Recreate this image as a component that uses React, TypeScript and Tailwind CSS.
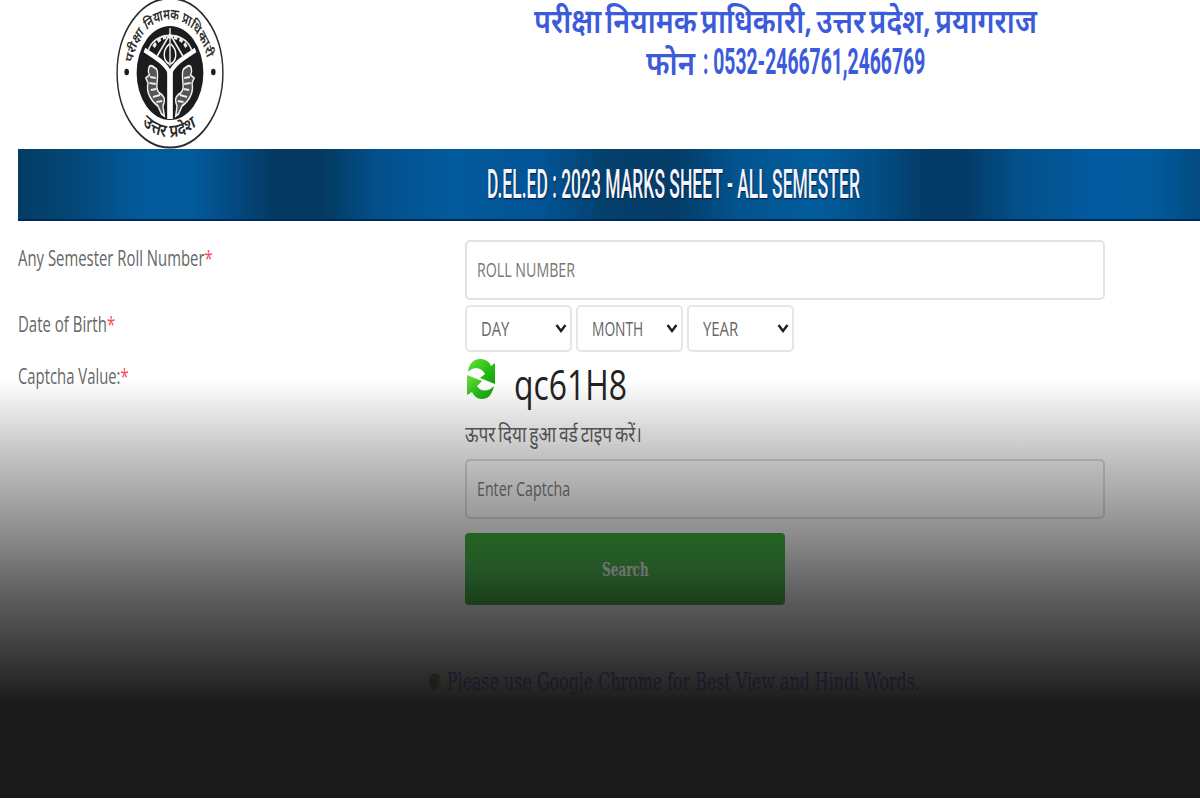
import { useLayoutEffect, useRef, useState, type ReactNode } from "react";

// Condenses its text horizontally so that it fills exactly `width` pixels
function FitText({ width, className = "", children }: { width: number; className?: string; children: ReactNode }) {
  const ref = useRef<HTMLSpanElement>(null);
  const [scale, setScale] = useState(1);

  useLayoutEffect(() => {
    if (ref.current) setScale(width / ref.current.offsetWidth);
  }, [width]);

  return (
    <span className="block" style={{ width }}>
      <span
        ref={ref}
        className={`inline-block origin-left whitespace-nowrap align-top ${className}`}
        style={{ transform: `scaleX(${scale})` }}
      >
        {children}
      </span>
    </span>
  );
}

function Emblem() {
  return (
    <svg className="h-[149px] w-[108px]" viewBox="0 0 108 149" fill="none">
      <g transform="translate(54 73) scale(0.71 1)">
        <circle r="74.5" fill="#fff" stroke="#2a2a2a" strokeWidth="2" />
        <circle r="47" fill="#1c1c1c" />
        <circle cx="-61" cy="-1" r="3.2" fill="#1c1c1c" />
        <circle cx="61" cy="-1" r="3.2" fill="#1c1c1c" />
        <path id="arc-top" d="M-53 -10 A54 54 0 0 1 53 -10" />
        <path id="arc-bottom" d="M-39 51 A64 64 0 0 0 39 51" />
        <text className="font-['Noto_Sans',sans-serif] text-[15px] font-semibold" fill="#2a2a2a">
          <textPath href="#arc-top" textLength="144" lengthAdjust="spacingAndGlyphs">
            परीक्षा नियामक प्राधिकारी
          </textPath>
        </text>
        <text className="font-['Noto_Sans',sans-serif] text-[18px] font-semibold" fill="#2a2a2a">
          <textPath href="#arc-bottom" textLength="81" lengthAdjust="spacingAndGlyphs">
            उत्तर प्रदेश
          </textPath>
        </text>
        {/* bow and river fork */}
        <path d="M-36 -23 C-22 -16 -5 -10 0 1 C5 -10 22 -16 36 -23" stroke="#fff" strokeWidth="5" />
        <path d="M-4 -2 H4 V46 H-4 Z" fill="#fff" />
        <path d="M0 -45 V-7 M0 -39 L-18 -17 M0 -39 L18 -17 M-31 -21 C-25 -43 25 -43 31 -21" stroke="#eee" strokeWidth="2" />
        <path d="M-23 -26 C-15 -40 15 -40 23 -26" stroke="#eee" strokeWidth="4" strokeDasharray="5 3" />
        <path d="M-1 -29 C-12 -22 -9 -12 -1 -9 M1 -29 C12 -22 9 -12 1 -9" stroke="#fff" strokeWidth="2" />
        {/* twin fish */}
        <g id="fish" stroke="#eee" strokeWidth="2">
          <path d="M-25 -7 C-30 -9 -32 -2 -29 2 L-34 5 L-31 10 C-34 19 -27 28 -17 33 L-12 41 L-8 43 L-10 33 C-5 25 -10 22 -15 20 C-23 15 -14 3 -19 -4 Z" fill="#555" />
          <path d="M-28 4 L-20 5 M-29 10 L-20 11 M-27 17 L-19 16 M-24 24 L-14 22 M-19 29 L-11 28" />
        </g>
        <use href="#fish" transform="scale(-1 1)" />
      </g>
    </svg>
  );
}

function RefreshIcon() {
  return (
    <svg className="h-[42px] w-[31px]" viewBox="0 0 31 42">
      <defs>
        <linearGradient id="leaf" x1="0" y1="0" x2="1" y2="1">
          <stop offset="0" stopColor="#6be03c" />
          <stop offset="0.55" stopColor="#2bbd16" />
          <stop offset="1" stopColor="#159c0e" />
        </linearGradient>
      </defs>
      <path d="M2 14 C3 5 8 1 14 1 C19 1 23 3 25 8 L29 5 V26 L14 20 L19 16 C15 9 8 8 2 14 Z" fill="url(#leaf)" />
      <path d="M28 28 C26 37 22 41 16 41 C11 41 8 38 6 34 L1 37 V17 L16 23 L11 28 C15 34 22 34 28 28 Z" fill="url(#leaf)" />
    </svg>
  );
}

function Label({ width, children }: { width: number; children: ReactNode }) {
  return (
    <FitText width={width} className="text-[21px] leading-9 text-[#666]">
      {children}
      <span className="text-[#ff4a55]">*</span>
    </FitText>
  );
}

function SelectBox({ label, width }: { label: string; width: number }) {
  return (
    <div className="flex h-[47px] w-[107px] items-center justify-between rounded-[5px] border-2 border-[#e6e6e6] bg-white pr-[3px] pl-[14px]">
      <FitText width={width} className="text-[20px] leading-8 text-[#666]">
        {label}
      </FitText>
      <svg className="h-3 w-3" viewBox="0 0 12 12" fill="none">
        <path d="M1.5 2 L6 8 L10.5 2" stroke="#1e1e1e" strokeWidth="2.4" />
      </svg>
    </div>
  );
}

const dateParts = [
  { label: "DAY", width: 28 },
  { label: "MONTH", width: 51 },
  { label: "YEAR", width: 35 },
];

export default function App() {
  return (
    <div className="relative h-[800px] w-[1200px] overflow-hidden bg-white font-['Open_Sans','Noto_Sans',sans-serif]">
      <header className="flex h-[149px] pl-[116px]">
        <Emblem />
        <div className="ml-[310px] flex w-[503px] flex-col items-center text-[#3b5bdb]">
          <FitText
            width={503}
            className="font-['Noto_Sans',sans-serif] text-[34px] leading-[40px] font-semibold [word-spacing:-4px]"
          >
            परीक्षा नियामक प्राधिकारी, उत्तर प्रदेश, प्रयागराज
          </FitText>
          <div className="flex gap-2">
            <FitText width={49} className="font-['Noto_Sans',sans-serif] text-[34px] leading-[44px] font-semibold">
              फोन
            </FitText>
            <FitText width={222} className="font-[Roboto,sans-serif] text-[37px] leading-[44px] font-bold">
              : 0532-2466761,2466769
            </FitText>
          </div>
        </div>
      </header>

      <div className="ml-[18px] flex h-[72px] items-center border-b-2 border-[#03295a] bg-[linear-gradient(90deg,#043c62_0px,#044777_55px,#025a9c_125px,#025a9a_175px,#044a82_215px,#043a62_255px,#043a62_305px,#03508c_360px,#025a9c_430px,#025596_520px,#04406b_590px,#043d68_660px,#035490_720px,#025c9c_800px,#034d84_860px,#043a66_910px,#043a66_945px,#03508a_1000px,#025ba2_1085px,#02599a_1140px,#034b80_1182px)] pl-[469px]">
        <FitText
          width={373}
          className="font-[Roboto,sans-serif] text-[41px] leading-[68px] font-medium text-[#f3f4ff] [text-shadow:1px_1px_2px_#00183c]"
        >
          D.EL.ED : 2023 MARKS SHEET - ALL SEMESTER
        </FitText>
      </div>

      <form className="ml-[18px] grid grid-cols-[447px_640px] grid-rows-[66px_52px_101px_auto] pt-[19px]">
        <Label width={195}>Any Semester Roll Number</Label>
        <div className="flex h-[60px] items-center rounded-[5px] border-2 border-[#e2e2e2] bg-white pl-[10px]">
          <FitText width={98} className="text-[20px] leading-8 text-[#777]">
            ROLL NUMBER
          </FitText>
        </div>

        <Label width={97}>Date of Birth</Label>
        <div className="-mt-px flex gap-[4px]">
          {dateParts.map((part) => (
            <SelectBox key={part.label} label={part.label} width={part.width} />
          ))}
        </div>

        <Label width={111}>Captcha Value:</Label>
        <div>
          <div className="flex h-[54px] items-start gap-[17px] pl-px">
            <RefreshIcon />
            <FitText width={113} className="text-[42px] leading-[52px] text-[#222]">
              qc61H8
            </FitText>
          </div>
          <FitText
            width={177}
            className="font-['Noto_Sans',sans-serif] text-[22px] leading-[42px] text-[#5c5c5c] [word-spacing:-2px]"
          >
            ऊपर दिया हुआ वर्ड टाइप करें।
          </FitText>
        </div>

        <div className="col-start-2">
          <div className="flex h-[60px] items-center rounded-[5px] border-2 border-[#dcdcdc] pl-[10px]">
            <FitText width={93} className="text-[20px] leading-8 text-[#777]">
              Enter Captcha
            </FitText>
          </div>
          <div className="mt-[14px] flex h-[72px] w-[320px] items-center justify-center rounded-[4px] bg-linear-to-b from-[#28ad28] via-[#39b53c] to-[#1a9d1a]">
            <FitText width={47} className="font-['DejaVu_Serif',serif] text-[19px] leading-8 font-bold text-white">
              Search
            </FitText>
          </div>
        </div>
      </form>

      <div className="mt-[56px] ml-[429px] flex items-center gap-[6px]">
        <svg className="h-[18px] w-[12px]" viewBox="0 0 14 18" preserveAspectRatio="none">
          <ellipse cx="7" cy="9" rx="7" ry="9" fill="#e0a400" />
          <path d="M7 9 L1 4 C3 -1 11 -1 13 4 Z" fill="#d93025" />
          <path d="M7 9 L1 4 C-2 12 3 18 7 18 Z" fill="#188038" />
          <ellipse cx="7" cy="9" rx="3" ry="4" fill="#0b5c2a" />
        </svg>
        <FitText width={473} className="font-['DejaVu_Serif',serif] text-[25px] leading-[42px] text-[#0000ff]">
          Please use Google Chrome for Best View and Hindi Words.
        </FitText>
      </div>

      {/* dark fade over the lower half */}
      <div className="pointer-events-none absolute inset-x-0 top-[380px] h-[418px] bg-[linear-gradient(180deg,rgba(26,26,26,0)_0px,rgba(26,26,26,0.14)_40px,rgba(26,26,26,0.27)_78px,rgba(26,26,26,0.45)_138px,rgba(26,26,26,0.62)_190px,rgba(26,26,26,0.72)_223px,rgba(26,26,26,0.82)_260px,rgba(26,26,26,0.9)_290px,rgba(26,26,26,0.95)_308px,#1a1a1a_325px)]" />
    </div>
  );
}
